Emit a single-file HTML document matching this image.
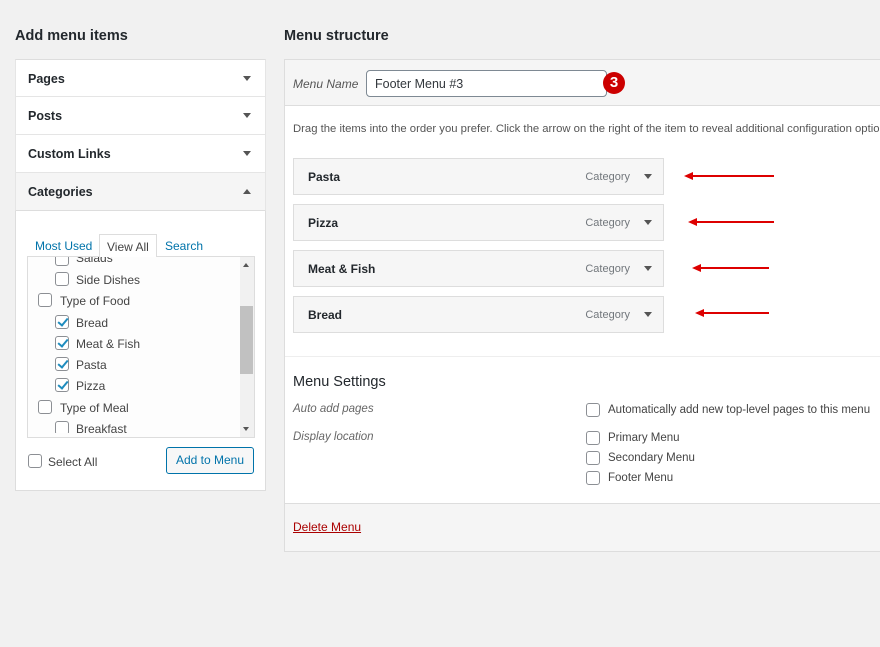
<!DOCTYPE html>
<html><head><style>
*{box-sizing:border-box;margin:0;padding:0}
html,body{width:880px;height:647px;overflow:hidden}
body{background:#f1f1f1;font-family:"Liberation Sans",sans-serif;font-size:13px;color:#23282d;position:relative}
.a{position:absolute;white-space:nowrap}
h2{position:absolute;font-size:14.5px;font-weight:bold;color:#23282d}
.acc{position:absolute;left:15px;width:251px;height:38px;border:1px solid #e5e5e5;border-top:none;background:#fff;font-weight:bold;font-size:12.5px;padding:12px 12px}
.tri{position:absolute;right:14px;top:16px;width:0;height:0;border-left:4px solid transparent;border-right:4px solid transparent;border-top:5px solid #555}
.up{border-top:none;border-bottom:5px solid #555}
.cb{position:absolute;width:14px;height:14px;border:1px solid #8c8f94;border-radius:3px;background:#fff}
.cb.on::after{content:"";position:absolute;left:3.5px;top:0px;width:4px;height:8px;border:solid #1e8cbe;border-width:0 2px 2px 0;transform:rotate(40deg)}
.lt{position:absolute;color:#444;font-size:12px;white-space:nowrap}
.item{position:absolute;left:293px;width:371px;height:37px;border:1px solid #ddd;background:#f6f6f6;padding:11px 14px;font-weight:bold;font-size:12px}
.item .cat{position:absolute;right:33px;top:12px;font-weight:normal;color:#72777c;font-size:11px}
.item .tri{right:11px;top:15px}
.arr{position:absolute;height:2px;background:#d00}
.arr::before{content:"";position:absolute;left:-8px;top:-3px;border-top:4px solid transparent;border-bottom:4px solid transparent;border-right:9px solid #d00}
</style></head><body>
<h2 style="left:15px;top:28px">Add menu items</h2>
<h2 style="left:284px;top:28px">Menu structure</h2>

<div class="a" style="left:15px;top:59px;width:251px;height:432px;border:1px solid #ddd;background:#fff"></div>
<div class="acc" style="top:59px;border-top:1px solid #ddd">Pages<span class="tri"></span></div>
<div class="acc" style="top:97px">Posts<span class="tri"></span></div>
<div class="acc" style="top:135px">Custom Links<span class="tri"></span></div>
<div class="acc" style="top:173px;background:#f5f5f5;border-bottom:1px solid #ddd">Categories<span class="tri up"></span></div>

<div class="a" style="left:35px;top:239px;color:#0073aa;font-size:12px">Most Used</div>
<div class="a" style="left:99px;top:234px;width:58px;height:23px;border:1px solid #ddd;border-bottom:none;background:#fff;padding:5px 0 0 7px;font-size:12px;color:#444;z-index:2">View All</div>
<div class="a" style="left:165px;top:239px;color:#0073aa;font-size:12px">Search</div>
<div class="a" style="left:27px;top:256px;width:228px;height:182px;border:1px solid #ddd;background:#fdfdfd;overflow:hidden">
 <div class="a" style="left:212px;top:0;width:14px;height:180px;background:#f1f1f1"></div>
 <div class="a" style="left:212px;top:49px;width:13px;height:68px;background:#c1c1c1"></div>
 <div class="a" style="left:215px;top:6px;border-left:3px solid transparent;border-right:3px solid transparent;border-bottom:4px solid #555"></div>
 <div class="a" style="left:215px;top:170px;border-left:3px solid transparent;border-right:3px solid transparent;border-top:4px solid #555"></div>
</div>
<div class="cb" style="left:55px;top:252px;clip-path:inset(5px 0 0 0)"></div><div class="lt" style="left:76px;top:251px;clip-path:inset(6px 0 0 0)">Salads</div>
<div class="cb" style="left:55px;top:272px"></div><div class="lt" style="left:76px;top:273px">Side Dishes</div>
<div class="cb" style="left:38px;top:293px"></div><div class="lt" style="left:60px;top:294px">Type of Food</div>
<div class="cb on" style="left:55px;top:315px"></div><div class="lt" style="left:76px;top:316px">Bread</div>
<div class="cb on" style="left:55px;top:336px"></div><div class="lt" style="left:76px;top:337px">Meat &amp; Fish</div>
<div class="cb on" style="left:55px;top:357px"></div><div class="lt" style="left:76px;top:358px">Pasta</div>
<div class="cb on" style="left:55px;top:378px"></div><div class="lt" style="left:76px;top:379px">Pizza</div>
<div class="cb" style="left:38px;top:400px"></div><div class="lt" style="left:60px;top:401px">Type of Meal</div>
<div class="cb" style="left:55px;top:421px;clip-path:inset(0 0 2px 0)"></div><div class="lt" style="left:76px;top:422px">Breakfast</div>
<div class="cb" style="left:28px;top:454px"></div><div class="lt" style="left:48px;top:455px">Select All</div>
<div class="a" style="left:166px;top:447px;width:88px;height:27px;border:1px solid #0073aa;border-radius:3px;background:#f7f7f7;color:#0073aa;font-size:12px;text-align:center;line-height:25px">Add to Menu</div>

<div class="a" style="left:284px;top:59px;width:600px;height:493px;border:1px solid #ddd;background:#fff"></div>
<div class="a" style="left:285px;top:60px;width:600px;height:46px;background:#f5f5f5;border-bottom:1px solid #ddd"></div>
<div class="a" style="left:293px;top:77px;font-style:italic;color:#555;font-size:12px">Menu Name</div>
<div class="a" style="left:366px;top:70px;width:241px;height:27px;border:1px solid #7e8993;border-radius:4px;background:#fff;padding:6px 8px;font-size:12.5px;color:#32373c">Footer Menu #3</div>
<div class="a" style="left:603px;top:72px;width:22px;height:22px;border-radius:50%;background:#c00;color:#fff;font-weight:bold;font-size:15px;text-align:center;line-height:22px">3</div>
<div class="a" style="left:293px;top:123px;color:#555;font-size:11.3px">Drag the items into the order you prefer. Click the arrow on the right of the item to reveal additional configuration options.</div>

<div class="item" style="top:158px">Pasta<span class="cat">Category</span><span class="tri"></span></div>
<div class="item" style="top:204px">Pizza<span class="cat">Category</span><span class="tri"></span></div>
<div class="item" style="top:250px">Meat &amp; Fish<span class="cat">Category</span><span class="tri"></span></div>
<div class="item" style="top:296px">Bread<span class="cat">Category</span><span class="tri"></span></div>
<div class="arr" style="left:692px;top:175px;width:82px"></div>
<div class="arr" style="left:696px;top:221px;width:78px"></div>
<div class="arr" style="left:700px;top:267px;width:69px"></div>
<div class="arr" style="left:703px;top:312px;width:66px"></div>

<div class="a" style="left:285px;top:356px;width:600px;height:1px;background:#eee"></div>
<div class="a" style="left:293px;top:374px;font-size:14.5px;color:#23282d">Menu Settings</div>
<div class="a" style="left:293px;top:403px;font-style:italic;color:#666;font-size:11.5px">Auto add pages</div>
<div class="a" style="left:293px;top:431px;font-style:italic;color:#666;font-size:11.5px">Display location</div>
<div class="cb" style="left:586px;top:403px"></div><div class="lt" style="left:608px;top:404px;font-size:11.5px">Automatically add new top-level pages to this menu</div>
<div class="cb" style="left:586px;top:431px"></div><div class="lt" style="left:608px;top:432px;font-size:11.5px">Primary Menu</div>
<div class="cb" style="left:586px;top:451px"></div><div class="lt" style="left:608px;top:452px;font-size:11.5px">Secondary Menu</div>
<div class="cb" style="left:586px;top:471px"></div><div class="lt" style="left:608px;top:472px;font-size:11.5px">Footer Menu</div>
<div class="a" style="left:285px;top:503px;width:600px;height:48px;background:#f5f5f5;border-top:1px solid #ddd"></div>
<div class="a" style="left:293px;top:520px;color:#a00;text-decoration:underline;font-size:12px">Delete Menu</div>
</body></html>
